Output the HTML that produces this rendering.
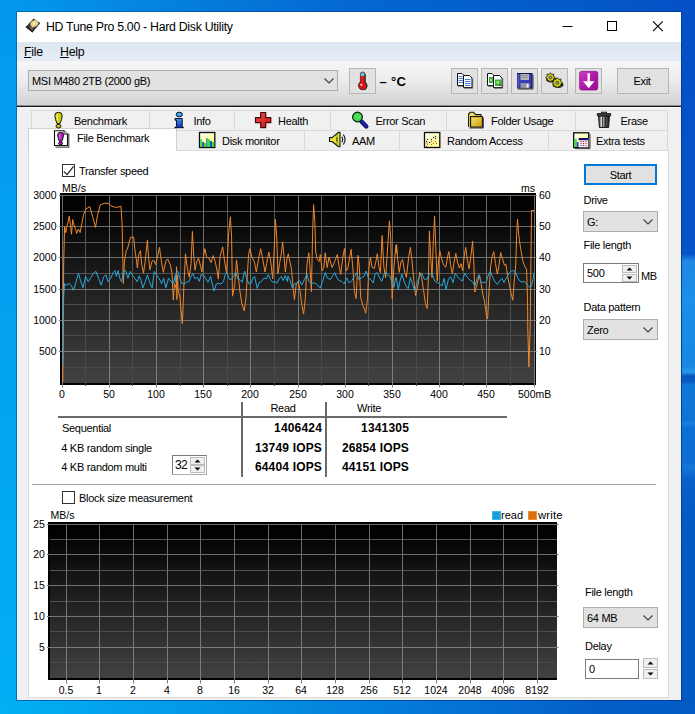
<!DOCTYPE html>
<html><head><meta charset="utf-8"><title>HD Tune Pro 5.00 - Hard Disk Utility</title>
<style>
*{box-sizing:border-box;margin:0;padding:0}
html,body{width:695px;height:714px;overflow:hidden}
body{position:relative;font-family:"Liberation Sans",sans-serif;font-size:12px;color:#000;
 background:linear-gradient(90deg,#039af0 0%,#0583e0 22%,#0468d0 50%,#045ac8 80%,#0450c5 100%);}
.abs{position:absolute}
.t{position:absolute;white-space:nowrap;line-height:14px;height:14px}
.ui{font-size:11px;letter-spacing:-0.3px}
.ui.b{font-size:12px;letter-spacing:0.17px}
.ax{font-size:10.5px}
.b{font-weight:bold}
#win{left:16px;top:11px;width:666px;height:690px;background:#f0f0f0;background-clip:padding-box;border:1px solid rgba(0,20,70,0.32)}
#title{left:17px;top:12px;width:664px;height:30px;background:#fff}
#menu{left:17px;top:42px;width:664px;height:19px;background:linear-gradient(180deg,#dde5f0 0%,#e8eef6 100%)}
#tool{left:17px;top:61px;width:664px;height:44px;background:linear-gradient(180deg,#f6f6f6 0%,#ececec 45%,#d2d2d2 100%)}
#toolline{left:17px;top:105px;width:664px;height:3px;background:linear-gradient(180deg,#8e8e8e 0,#8e8e8e 1px,#151515 1px,#151515 2px,#fafafa 2px,#fafafa 3px)}
.btn{position:absolute;background:#e1e1e1;border:1px solid #b6b6b6}
.combo{position:absolute;background:#e1e1e1;border:1px solid #adadad}
.edit{position:absolute;background:#fff;border:1px solid #7a7a7a}
.tab{position:absolute;background:#f0f0f0;border:1px solid #d9d9d9;border-bottom:none}
#page{left:28px;top:150px;width:641px;height:548px;background:#fff;border:1px solid #dcdcdc}
.chk{position:absolute;width:13px;height:13px;background:#fff;border:1px solid #333}
.spin{position:absolute;background:#f0f0f0;border:1px solid #bcbcbc}
</style></head>
<body>
<div class="abs" style="left:0;top:0;width:16px;height:714px;background:linear-gradient(180deg,#0398ee,#02aef4)"></div>
<div class="abs" style="left:682px;top:0;width:13px;height:714px;background:linear-gradient(180deg,#044fc6 0px,#0654c8 254px,#2088e4 261px,#1a90e8 300px,#1888e2 366px,#2a98ea 372px,#0a58c0 376px,#0a58c0 381px,#1078d8 385px,#0e74d6 420px,#1a80de 423px,#0c70d4 428px,#0c6cd2 462px,#1478da 466px,#0860c8 480px,#0458c4 530px,#035ac4 714px)"></div>
<div class="abs" style="left:0;top:701px;width:695px;height:13px;background:linear-gradient(90deg,#02b0f4 0%,#0496e6 30%,#0478d8 60%,#0460c8 85%,#035ac4 100%)"></div>
<div id="win" class="abs"></div>
<div id="title" class="abs"></div>
<div id="menu" class="abs"></div>
<div id="tool" class="abs"></div>
<div id="toolline" class="abs"></div>
<svg class="abs" style="left:25px;top:18px" width="16" height="15" viewBox="25 18 16 15">
<polygon points="33.6,18.6 40.4,23.1 32.5,32.5 25.6,26.9" fill="#3b3637"/>
<polygon points="25.6,26.9 32.5,32.5 32.8,31.2 26.3,25.9" fill="#151314"/>
<ellipse cx="34.4" cy="23.6" rx="4.1" ry="3.2" transform="rotate(-30 34.4 23.6)" fill="#e6cf85"/>
<ellipse cx="34.2" cy="23.4" rx="1.7" ry="1.3" transform="rotate(-30 34.2 23.4)" fill="#f7edc0"/>
<path d="M29.5 27.3 L32.5 29.5 M30.6 26.2 L33.4 28.3" stroke="#8d8b92" stroke-width="0.9"/>
</svg>
<div class="t " style="left:46px;top:20px;font-size:12.3px;letter-spacing:-0.28px">HD Tune Pro 5.00 - Hard Disk Utility</div>
<svg class="abs" style="left:555px;top:12px" width="126" height="30" viewBox="0 0 126 30"><path d="M7.5 14.5 H17.5" stroke="#000" stroke-width="1"/><rect x="52.5" y="9.5" width="9" height="9" fill="none" stroke="#000" stroke-width="1"/><path d="M98 9.3 L107.8 19.1 M107.8 9.3 L98 19.1" stroke="#000" stroke-width="1.1"/></svg>
<div class="t " style="left:24px;top:44.5px;font-size:12.3px;letter-spacing:-0.25px"><u>F</u>ile</div>
<div class="t " style="left:60px;top:44.5px;font-size:12.3px;letter-spacing:-0.25px"><u>H</u>elp</div>
<div class="combo" style="left:28px;top:70px;width:310px;height:21px"></div>
<div class="t ui" style="left:32px;top:73.5px;">MSI M480 2TB (2000 gB)</div>
<svg class="abs" style="left:323px;top:77px" width="12" height="8" viewBox="0 0 12 8"><path d="M1.5 1.5 L6 6 L10.5 1.5" fill="none" stroke="#444" stroke-width="1.2"/></svg>
<div class="btn" style="left:349px;top:68px;width:27px;height:26px"></div>
<svg class="abs" style="left:355px;top:70px" width="16" height="22" viewBox="355 70 16 22">
<path d="M360.4 74.3 Q360.4 72 362.6 72 Q364.9 72 364.9 74.3 V82 H360.4 Z" fill="#e01818" stroke="#222" stroke-width="0.7"/>
<path d="M360.8 74.3 Q360.8 72.4 362.6 72.4 Q364.5 72.4 364.5 74.3 V76 H360.8 Z" fill="#58c8e0"/>
<circle cx="362.7" cy="85.6" r="4.1" fill="#d81414" stroke="#3a0808" stroke-width="0.8"/>
<rect x="360.9" y="78" width="3.6" height="5" fill="#e01818"/>
<path d="M365.2 74 V82.5 Q367 84 366.9 86.5 Q366.5 89 364.5 89.8" fill="none" stroke="#222" stroke-width="1"/>
<circle cx="361.3" cy="84.8" r="1.1" fill="#fff" opacity="0.85"/>
</svg>
<div class="t b" style="left:379.5px;top:75px;font-size:13px;letter-spacing:0.3px">&#8211; &#176;C</div>
<div class="btn" style="left:451px;top:68px;width:27px;height:26px"></div>
<div class="btn" style="left:481px;top:68px;width:27px;height:26px"></div>
<div class="btn" style="left:511px;top:68px;width:27px;height:26px"></div>
<div class="btn" style="left:541px;top:68px;width:27px;height:26px"></div>
<div class="btn" style="left:575px;top:68px;width:27px;height:26px"></div>
<svg class="abs" style="left:455px;top:70px" width="22" height="22" viewBox="455 70 22 22"><path d="M457.5 73.5 H462 L464 75.5 V85.5 H457.5 Z" fill="#fff" stroke="#111" stroke-width="1"/><path d="M458 86.2 H464.6 V76" fill="none" stroke="#555" stroke-width="0.9"/><path d="M458.5 76.5H462.5M458.5 78.5H463M458.5 80.5H463M458.5 82.5H463" stroke="#3a80e0" stroke-width="1"/><path d="M463.5 75.5 H469.5 L472 78 V87.5 H463.5 Z" fill="#fff" stroke="#111" stroke-width="1"/><path d="M464 88.2 H472.7 V78.5" fill="none" stroke="#555" stroke-width="0.9"/><path d="M465 79.5H470.5M465 81.5H470.5M465 83.5H470.5M465 85.5H470.5" stroke="#3a80e0" stroke-width="1"/></svg>
<svg class="abs" style="left:485px;top:70px" width="22" height="22" viewBox="485 70 22 22"><path d="M487.5 73.5 H492 L494 75.5 V85.5 H487.5 Z" fill="#fff" stroke="#111" stroke-width="1"/><path d="M488 86.2 H494.6 V76" fill="none" stroke="#555" stroke-width="0.9"/><rect x="489" y="77" width="4.5" height="6" fill="#38b048"/><rect x="490" y="79" width="2" height="2" fill="#b8e850"/><path d="M493.5 75.5 H499.5 L502 78 V87.5 H493.5 Z" fill="#fff" stroke="#111" stroke-width="1"/><path d="M494 88.2 H502.7 V78.5" fill="none" stroke="#555" stroke-width="0.9"/><rect x="495" y="79.5" width="6" height="6.5" fill="#38b048"/><rect x="496.5" y="81" width="2.5" height="2.5" fill="#b8e850"/><rect x="499.5" y="84.5" width="1.2" height="1.2" fill="#123"/></svg>
<svg class="abs" style="left:515px;top:70px" width="22" height="22" viewBox="515 70 22 22">
<rect x="517.5" y="73.5" width="14.5" height="14.5" fill="#3a3ab4" stroke="#14144a" stroke-width="1"/>
<path d="M518 89 H533 V74.5" fill="none" stroke="#333" stroke-width="1"/>
<rect x="520.5" y="74" width="8.5" height="6" fill="#b4b4b4"/>
<path d="M521.5 75.5H528M521.5 77.5H528" stroke="#8a8a8a" stroke-width="0.8"/>
<rect x="520.5" y="83" width="9" height="5" fill="#9090a0"/><rect x="526.5" y="84" width="2" height="3.5" fill="#f0f0f0"/>
<path d="M518 74 V88" stroke="#7070e0" stroke-width="1"/>
</svg>
<svg class="abs" style="left:543px;top:70px" width="24" height="22" viewBox="543 70 24 22"><ellipse cx="551" cy="79.3" rx="5" ry="3.2" fill="#222"/><ellipse cx="558" cy="84.8" rx="5.5" ry="3.2" fill="#222"/><polygon points="555.2,77.5 553.4,78.8 553.8,80.9 551.7,80.5 550.4,82.3 549.1,80.5 547.0,80.9 547.4,78.8 545.6,77.5 547.4,76.2 547.0,74.1 549.1,74.5 550.4,72.7 551.7,74.5 553.8,74.1 553.4,76.2" fill="#d8d820" stroke="#2a2a08" stroke-width="0.9" stroke-linejoin="round"/><circle cx="550.4" cy="77.5" r="1.6" fill="#8a8a8a" stroke="#333" stroke-width="0.6"/><polygon points="562.5,82.8 560.7,84.2 561.0,86.5 558.7,86.2 557.3,88.0 555.9,86.2 553.6,86.5 553.9,84.2 552.1,82.8 553.9,81.4 553.6,79.1 555.9,79.4 557.3,77.6 558.7,79.4 561.0,79.1 560.7,81.4" fill="#d0d018" stroke="#2a2a08" stroke-width="0.9" stroke-linejoin="round"/><circle cx="557.3" cy="82.8" r="1.6" fill="#8a8a8a" stroke="#333" stroke-width="0.6"/></svg>
<svg class="abs" style="left:578px;top:70px" width="22" height="22" viewBox="578 70 22 22">
<defs><linearGradient id="pg" x1="0" y1="0" x2="1" y2="1"><stop offset="0" stop-color="#cc44c8"/><stop offset="0.5" stop-color="#b018aa"/><stop offset="1" stop-color="#980c94"/></linearGradient></defs>
<rect x="579.7" y="71.4" width="18" height="18.6" rx="2" fill="url(#pg)" stroke="#8a0a86" stroke-width="0.8"/>
<path d="M588.7 73.2 V84" stroke="#fff" stroke-width="2.4"/><path d="M583 81.3 H594.4 L588.7 88.2 Z" fill="#fff"/>
</svg>
<div class="btn" style="left:617px;top:68px;width:52px;height:26px"></div>
<div class="t ui" style="left:592px;width:100px;top:74px;text-align:center;">Exit</div>
<div class="tab" style="left:31px;top:110px;width:119px;height:21px"></div>
<div class="t ui" style="left:74px;top:113.5px;">Benchmark</div>
<div class="tab" style="left:149px;top:110px;width:86px;height:21px"></div>
<div class="t ui" style="left:193.5px;top:113.5px;">Info</div>
<div class="tab" style="left:234px;top:110px;width:97px;height:21px"></div>
<div class="t ui" style="left:278px;top:113.5px;">Health</div>
<div class="tab" style="left:330px;top:110px;width:117px;height:21px"></div>
<div class="t ui" style="left:375.5px;top:113.5px;">Error Scan</div>
<div class="tab" style="left:446px;top:110px;width:130px;height:21px"></div>
<div class="t ui" style="left:491px;top:113.5px;">Folder Usage</div>
<div class="tab" style="left:575px;top:110px;width:93px;height:21px"></div>
<div class="t ui" style="left:620.5px;top:113.5px;">Erase</div>
<div class="tab" style="left:176px;top:130px;width:129px;height:21px"></div>
<div class="t ui" style="left:222px;top:133.5px;">Disk monitor</div>
<div class="tab" style="left:304px;top:130px;width:96px;height:21px"></div>
<div class="t ui" style="left:352px;top:133.5px;">AAM</div>
<div class="tab" style="left:399px;top:130px;width:150px;height:21px"></div>
<div class="t ui" style="left:447px;top:133.5px;">Random Access</div>
<div class="tab" style="left:548px;top:130px;width:120px;height:21px"></div>
<div class="t ui" style="left:596px;top:133.5px;">Extra tests</div>
<div id="page" class="abs"></div>
<div class="tab" style="left:28px;top:128px;width:149px;height:23px;background:#fff;border-color:#d0d0d0"></div>
<div class="t ui" style="left:77px;top:131px;">File Benchmark</div>
<svg class="abs" style="left:52px;top:110px" width="14" height="20" viewBox="52 110 14 20"><path d="M54.8 115.5 Q54.8 112.3 58.5 112.3 Q62.2 112.3 62.2 115.5 Q61.900000000000006 119.3 60.0 123.6 H57.0 Q55.099999999999994 119.3 54.8 115.5 Z" fill="#cfcf10" stroke="#111" stroke-width="1"/><ellipse cx="58.5" cy="126.19999999999999" rx="2.5" ry="1.8" fill="#cfcf10" stroke="#111" stroke-width="1"/><path d="M57.3 114.3 Q56.9 117.3 57.9 120.3" stroke="#f4f48a" stroke-width="1.1" fill="none"/></svg>
<svg class="abs" style="left:172px;top:110px" width="14" height="20" viewBox="172 110 14 20">
<defs><linearGradient id="ig" x1="0" y1="0" x2="0" y2="1"><stop offset="0" stop-color="#3a9af4"/><stop offset="1" stop-color="#0c2cc0"/></linearGradient></defs>
<ellipse cx="179.3" cy="114.5" rx="3.1" ry="2.3" fill="#38a8f0" stroke="#0a0a20" stroke-width="1"/>
<path d="M175 118.5 H182.2 V126.3 L183.6 127.7 H174.6 L176.6 126.3 V120.2 H175 Z" fill="url(#ig)" stroke="#0a0a20" stroke-width="1" stroke-linejoin="round"/>
</svg>
<svg class="abs" style="left:253px;top:110px" width="20" height="20" viewBox="253 110 20 20">
<defs><linearGradient id="hg" x1="0" y1="0" x2="1" y2="1"><stop offset="0" stop-color="#f45050"/><stop offset="1" stop-color="#c41010"/></linearGradient></defs>
<path d="M260.7 112.5 H265.7 V117.7 H270.8 V122.7 H265.7 V127.6 H260.7 V122.7 H255.5 V117.7 H260.7 Z" fill="url(#hg)" stroke="#4a0606" stroke-width="1.2" stroke-linejoin="round"/>
</svg>
<svg class="abs" style="left:350px;top:110px" width="20" height="20" viewBox="350 110 20 20">
<path d="M361.5 121.5 L366.3 126.5" stroke="#101050" stroke-width="4.4" stroke-linecap="round"/>
<path d="M361.5 121.3 L366.2 126.2" stroke="#2020b8" stroke-width="2.6" stroke-linecap="round"/>
<circle cx="357.5" cy="117" r="4.9" fill="#38d848" stroke="#0a1a0a" stroke-width="1.1"/>
<path d="M355 117.5 L358 114.5 M357 119.5 L360.3 116.2" stroke="#a8f0a8" stroke-width="1"/>
</svg>
<svg class="abs" style="left:466px;top:110px" width="20" height="20" viewBox="466 110 20 20">
<defs><linearGradient id="fg" x1="0" y1="0" x2="1" y2="1"><stop offset="0" stop-color="#f8e468"/><stop offset="1" stop-color="#d09c10"/></linearGradient></defs>
<path d="M468.6 127 V114 L470.3 112.3 H473.6 L475.6 114.6 H481 V117" fill="#f4e060" stroke="#111" stroke-width="1.1" stroke-linejoin="round"/>
<rect x="470.6" y="116.6" width="11.8" height="10.5" fill="url(#fg)" stroke="#111" stroke-width="1.1"/>
<path d="M469.3 128 H483.3 V117.5" fill="none" stroke="#333" stroke-width="1"/>
</svg>
<svg class="abs" style="left:595px;top:110px" width="18" height="20" viewBox="595 110 18 20">
<defs><linearGradient id="tg" x1="0" y1="0" x2="1" y2="0"><stop offset="0" stop-color="#333"/><stop offset="0.3" stop-color="#e8e8e8"/><stop offset="0.55" stop-color="#666"/><stop offset="1" stop-color="#1a1a1a"/></linearGradient></defs>
<path d="M598.6 116 H609.4 L608.6 127.4 H599.4 Z" fill="url(#tg)" stroke="#111" stroke-width="1"/>
<path d="M602.5 117V127M605.5 117V127" stroke="#222" stroke-width="0.8"/>
<path d="M597.3 113.6 H610.7 V115.8 H597.3 Z" fill="#444" stroke="#111" stroke-width="0.9"/>
<path d="M601.6 113.5 V112.3 H606.4 V113.5" fill="none" stroke="#111" stroke-width="1.1"/>
</svg>
<svg class="abs" style="left:52px;top:129px" width="18" height="19" viewBox="52 129 18 19">
<path d="M55.5 147.2 H68.8 V133.5" fill="none" stroke="#555" stroke-width="1.2"/>
<path d="M54.5 130.7 H64 L67.5 134.2 V145.5 H54.5 Z" fill="#fff" stroke="#111" stroke-width="1.1"/>
<path d="M64 130.7 V134.2 H67.5" fill="#ddd" stroke="#111" stroke-width="0.8"/>
<path d="M57.64 134.86 Q57.64 132.3 60.6 132.3 Q63.56 132.3 63.56 134.86 Q63.260000000000005 137.9 61.800000000000004 141.34 H59.4 Q57.94 137.9 57.64 134.86 Z" fill="#b820c0" stroke="#111" stroke-width="1"/><ellipse cx="60.6" cy="143.42000000000002" rx="2.0" ry="1.4400000000000002" fill="#b820c0" stroke="#111" stroke-width="1"/><path d="M59.64 133.9 Q59.32 136.3 60.120000000000005 138.70000000000002" stroke="#e890f0" stroke-width="0.8800000000000001" fill="none"/></svg>
<svg class="abs" style="left:197px;top:130px" width="20" height="20" viewBox="197 130 20 20">
<defs><linearGradient id="yg" x1="0" y1="0" x2="1" y2="1"><stop offset="0" stop-color="#fffff4"/><stop offset="1" stop-color="#ffff80"/></linearGradient></defs>
<rect x="199.5" y="132.500" width="15.300" height="15" fill="url(#yg)" stroke="#0a0a0a" stroke-width="1.3"/>
<path d="M200.2 147V139.2H202.2V147ZM204.2 147V143H206.200V147ZM207.500 147V139.300H210V147ZM212 147V142H214.200V147Z" fill="#30e040"/>
<path d="M202.2 147V142H204.2V147ZM210 147V141H212V147Z" fill="#2450c0"/>
<path d="M206.200 147V138H207.500V147Z" fill="#208868"/>
</svg>
<svg class="abs" style="left:327px;top:130px" width="20" height="19" viewBox="327 130 20 19">
<path d="M329.5 137.600 H332 L338.700 132.300 H340 V146.800 H338.700 L332 141.500 H329.500 Z" fill="#e4e438" stroke="#111" stroke-width="1.1" stroke-linejoin="round"/>
<path d="M337 134.500 V145" stroke="#8a8a10" stroke-width="1"/>
<circle cx="337" cy="138.500" r="0.700" fill="#111"/><circle cx="337" cy="140.500" r="0.700" fill="#111"/>
<path d="M341.800 136.700 Q343.600 139.500 341.800 142.300 M343.300 134.500 Q346.800 139.500 343.300 144.500" fill="none" stroke="#111" stroke-width="1.1"/>
</svg>
<svg class="abs" style="left:422px;top:130px" width="20" height="20" viewBox="422 130 20 20"><rect x="424.500" y="132.500" width="15.300" height="15" fill="url(#yg)" stroke="#0a0a0a" stroke-width="1.3"/><rect x="426.9" y="138.9" width="1.200" height="1.200" fill="#2a2a50"/><rect x="425.9" y="140.9" width="1.200" height="1.200" fill="#2a2a50"/><rect x="428.9" y="141.9" width="1.200" height="1.200" fill="#2a2a50"/><rect x="430.9" y="138.9" width="1.200" height="1.200" fill="#2a2a50"/><rect x="432.9" y="136.9" width="1.200" height="1.200" fill="#2a2a50"/><rect x="434.9" y="135.9" width="1.200" height="1.200" fill="#2a2a50"/><rect x="434.9" y="137.9" width="1.200" height="1.200" fill="#2a2a50"/><rect x="426.9" y="143.9" width="1.200" height="1.200" fill="#c86010"/><rect x="430.9" y="143.9" width="1.200" height="1.200" fill="#c86010"/><rect x="430.9" y="140.9" width="1.200" height="1.200" fill="#c86010"/><rect x="432.9" y="142.9" width="1.200" height="1.200" fill="#c86010"/><rect x="434.9" y="140.9" width="1.200" height="1.200" fill="#c86010"/><rect x="435.9" y="142.9" width="1.200" height="1.200" fill="#c86010"/><rect x="426.4" y="142.4" width="1.200" height="1.200" fill="#c86010"/><rect x="426" y="146" width="1.200" height="1.200" fill="#c01010"/></svg>
<svg class="abs" style="left:572px;top:130px" width="20" height="20" viewBox="572 130 20 20">
<rect x="573.700" y="132.800" width="15" height="14.800" fill="url(#yg)" stroke="#0a0a0a" stroke-width="1.3"/>
<path d="M590 134 V148.600 H575" fill="none" stroke="#444" stroke-width="1"/>
<rect x="574.400" y="139" width="2.300" height="8" fill="#30e040"/><rect x="576.700" y="142" width="2" height="5" fill="#2450c0"/>
<rect x="578.700" y="138" width="9.600" height="9.300" fill="#f4f4f4"/>
<rect x="578.700" y="138" width="9.600" height="2.200" fill="#101070"/>
<path d="M580.500 141.500h1.200M583 141.500h1.200M585.500 141.500h1.200M580.500 143.500h1.200M583 143.500h1.200M585.500 143.500h1.200M580.500 145.500h1.200M585.500 145.500h1.200" stroke="#c02040" stroke-width="1.200"/>
<path d="M583 145.500h1.200" stroke="#2030a0" stroke-width="1.200"/>
</svg>
<div class="chk" style="left:62px;top:164px"></div>
<svg class="abs" style="left:62px;top:164px" width="13" height="13" viewBox="0 0 13 13"><path d="M1.8 7.4 L5.1 10.6 L11.5 2.3" fill="none" stroke="#222" stroke-width="1.2"/></svg>
<div class="t ui" style="left:79px;top:164px;">Transfer speed</div>
<svg class="abs" style="left:0;top:0" width="695" height="714" viewBox="0 0 695 714">
<defs><linearGradient id="cg" x1="0" y1="0" x2="0" y2="1"><stop offset="0" stop-color="#000"/><stop offset="0.08" stop-color="#030303"/><stop offset="1" stop-color="#424242"/></linearGradient><linearGradient id="mj1" gradientUnits="userSpaceOnUse" x1="0" y1="195" x2="0" y2="383"><stop offset="0" stop-color="#6a6a6a"/><stop offset="1" stop-color="#7e7e7e"/></linearGradient><linearGradient id="mn1" gradientUnits="userSpaceOnUse" x1="0" y1="195" x2="0" y2="383"><stop offset="0" stop-color="#5a5a5a"/><stop offset="1" stop-color="#484848"/></linearGradient><linearGradient id="mj2" gradientUnits="userSpaceOnUse" x1="0" y1="524" x2="0" y2="678"><stop offset="0" stop-color="#6a6a6a"/><stop offset="1" stop-color="#7e7e7e"/></linearGradient><linearGradient id="mn2" gradientUnits="userSpaceOnUse" x1="0" y1="524" x2="0" y2="678"><stop offset="0" stop-color="#5a5a5a"/><stop offset="1" stop-color="#484848"/></linearGradient></defs>
<rect x="60" y="193" width="476" height="192" fill="#000"/>
<rect x="62" y="195" width="473" height="188" fill="url(#cg)"/>
<path d="M85.5 195 V386 M132.5 195 V386 M180.5 195 V386 M227.5 195 V386 M274.5 195 V386 M321.5 195 V386 M368.5 195 V386 M416.5 195 V386 M463.5 195 V386 M510.5 195 V386 M62 211.5 H535 M62 242.5 H535 M62 273.5 H535 M62 304.5 H535 M62 335.5 H535 M62 367.5 H535" stroke="url(#mn1)" stroke-width="1" fill="none"/>
<path d="M62.5 195 V387.5 M109.5 195 V387.5 M156.5 195 V387.5 M203.5 195 V387.5 M250.5 195 V387.5 M298.5 195 V387.5 M345.5 195 V387.5 M392.5 195 V387.5 M439.5 195 V387.5 M486.5 195 V387.5 M534.5 195 V387.5 M59 195.5 H536.5 M59 226.5 H536.5 M59 257.5 H536.5 M59 289.5 H536.5 M59 320.5 H536.5 M59 351.5 H536.5" stroke="url(#mj1)" stroke-width="1" fill="none"/>
<path d="M62.8,381.9 L63.2,330.1 L63.7,262.8 L64.6,226.5 L65.8,232.6 L66.6,227.4 L68.0,222.2 L69.2,216.2 L70.4,224.8 L71.5,234.3 L72.7,219.6 L73.9,224.8 L75.3,228.3 L76.6,233.4 L78.4,229.1 L80.1,232.6 L81.3,226.5 L83.6,214.4 L86.0,208.9 L89.9,206.7 L92.5,216.2 L95.5,227.4 L97.7,214.4 L100.3,204.9 L104.6,203.2 L108.9,203.6 L111.5,206.3 L116.7,207.5 L121.0,206.2 L122.2,226.5 L123.3,283.5 L124.5,261.1 L126.2,250.7 L127.4,249.0 L128.8,243.8 L130.5,237.2 L133.6,237.2 L134.8,249.0 L136.6,261.1 L137.4,268.0 L138.8,254.2 L140.5,250.7 L141.7,264.5 L143.5,273.2 L145.2,261.1 L147.4,240.3 L148.6,257.6 L149.9,269.7 L152.1,261.1 L153.8,260.2 L155.6,264.5 L157.3,257.6 L159.5,247.3 L161.3,261.1 L163.3,272.3 L165.9,261.1 L167.6,259.0 L170.2,264.5 L172.0,273.2 L173.3,299.9 L174.5,283.5 L176.3,288.7 L176.6,266.8 L176.9,299.6 L177.2,280.6 L177.5,275.4 L178.3,291.0 L180.0,297.9 L181.2,311.7 L182.4,323.8 L183.8,287.5 L185.5,253.8 L187.3,268.5 L189.3,277.2 L191.1,263.3 L192.4,231.4 L193.8,256.4 L195.0,270.3 L196.8,261.6 L198.5,258.2 L200.7,266.8 L201.9,272.0 L203.7,254.7 L204.9,248.7 L206.6,257.3 L208.8,258.2 L211.1,262.5 L213.2,255.6 L215.2,261.6 L217.0,270.3 L218.3,278.9 L220.1,256.4 L222.7,246.9 L224.4,259.9 L226.6,273.7 L228.7,232.3 L230.4,216.7 L231.6,237.4 L232.5,296.2 L234.7,285.8 L236.5,259.9 L238.2,275.4 L239.9,291.0 L241.7,303.1 L244.2,310.8 L246.0,297.9 L247.4,273.7 L248.6,254.7 L249.8,248.7 L252.0,257.3 L254.3,261.6 L256.3,272.0 L258.1,261.6 L260.6,248.7 L262.9,259.9 L265.0,272.0 L266.7,263.3 L268.8,252.1 L270.5,259.9 L272.7,278.9 L274.5,242.6 L275.3,219.3 L276.7,235.7 L277.9,273.7 L279.6,263.3 L281.4,253.0 L282.6,241.8 L284.0,256.4 L285.3,272.0 L287.1,258.2 L288.3,253.8 L289.3,258.9 L291.5,269.2 L293.2,288.2 L294.4,299.5 L296.2,284.8 L298.4,281.3 L300.1,291.7 L301.9,305.5 L303.6,314.1 L305.3,298.6 L307.0,264.1 L308.8,252.8 L310.0,267.5 L311.4,291.7 L312.7,229.5 L313.6,204.5 L314.8,220.9 L315.7,252.0 L317.4,259.7 L319.1,261.5 L320.3,254.6 L322.1,271.0 L323.8,267.5 L325.2,252.8 L327.2,267.5 L329.0,257.2 L332.1,267.5 L334.7,261.5 L337.3,254.6 L339.3,267.5 L340.7,274.4 L342.8,257.2 L344.5,248.5 L346.2,271.0 L348.0,267.5 L349.7,257.2 L351.1,249.4 L352.8,267.5 L354.5,291.7 L356.2,298.6 L358.0,255.4 L359.4,267.5 L360.6,296.9 L362.8,305.5 L364.5,309.0 L365.7,313.3 L367.5,298.6 L368.8,269.2 L370.4,257.2 L372.1,267.5 L374.4,268.4 L376.1,260.6 L377.3,253.7 L379.0,267.5 L380.4,272.7 L382.1,235.6 L383.9,267.5 L385.6,277.9 L387.7,246.8 L389.4,220.9 L390.8,239.9 L392.2,298.6 L393.9,267.5 L396.0,245.1 L396.3,253.3 L396.6,244.4 L397.8,260.3 L399.2,272.3 L400.9,262.0 L402.6,259.4 L404.7,272.3 L406.4,277.5 L408.7,256.8 L410.4,247.3 L412.1,262.0 L413.9,281.0 L415.6,295.6 L417.8,286.2 L419.9,272.3 L421.6,277.5 L423.7,291.3 L425.4,303.4 L427.2,308.6 L428.5,274.1 L429.4,230.9 L430.6,255.1 L432.0,277.5 L433.4,239.5 L434.6,216.2 L435.8,248.2 L437.2,281.0 L438.5,262.0 L439.8,250.8 L441.5,258.5 L443.7,265.4 L445.8,267.2 L447.9,255.1 L448.9,251.6 L450.6,265.4 L452.4,274.1 L454.1,262.0 L455.8,253.3 L457.5,262.0 L459.3,268.0 L461.0,263.7 L462.7,270.6 L464.4,255.1 L465.7,247.3 L467.4,260.3 L469.1,268.9 L470.8,256.8 L472.6,241.3 L473.8,262.0 L474.8,292.2 L476.5,286.2 L478.3,279.2 L479.5,274.9 L481.2,284.4 L482.9,294.8 L484.6,301.7 L486.4,315.5 L487.6,319.0 L489.0,291.3 L490.7,265.4 L492.4,255.1 L493.8,251.6 L495.5,263.7 L497.3,274.1 L499.0,265.4 L500.7,252.5 L502.4,258.5 L504.5,265.4 L505.9,264.1 L507.6,276.2 L509.4,284.8 L511.1,293.4 L512.8,300.3 L514.5,277.9 L515.8,264.1 L516.6,234.7 L517.5,219.2 L518.7,234.7 L520.4,246.8 L522.7,260.6 L524.9,266.7 L526.6,269.2 L527.5,298.6 L527.8,330 L528.9,367 L530.2,326 L531.5,210.5 L534.2,210.5" stroke="#f0862a" stroke-width="1" fill="none" stroke-linejoin="round"/>
<path d="M62.8,364.7 L63.2,323.2 L63.7,295.6 L64.6,283.5 L66.6,285.2 L69.2,283.5 L71.5,286.1 L73.5,290.4 L76.1,281.8 L78.4,273.2 L80.4,280.1 L83.0,287.8 L85.6,276.6 L88.2,281.8 L90.8,277.5 L93.4,273.2 L96.0,271.4 L98.6,278.3 L101.2,285.2 L103.8,276.6 L106.0,274.9 L108.1,281.8 L110.7,278.3 L113.3,272.3 L115.0,270.6 L116.4,276.6 L118.1,270.6 L119.8,278.3 L121.5,281.8 L123.6,271.4 L125.7,270.6 L127.9,278.3 L130.2,271.4 L132.2,274.9 L134.8,278.3 L137.1,281.8 L139.2,275.7 L140.9,280.1 L142.9,287.8 L145.2,281.8 L147.4,274.9 L149.5,281.8 L152.1,287.8 L154.3,271.4 L156.4,274.9 L159.0,278.3 L161.6,283.5 L163.7,278.3 L165.9,287.8 L168.5,278.3 L171.1,281.8 L173.3,283.5 L175.4,274.9 L175.7,282.3 L176.0,275.4 L176.0,272.8 L177.8,271.1 L179.5,277.2 L181.7,283.2 L183.8,284.1 L186.4,282.3 L189.0,281.5 L190.7,277.2 L192.8,273.7 L195.0,278.9 L197.3,277.2 L199.4,281.5 L201.1,274.6 L203.7,275.4 L205.9,278.9 L208.0,282.3 L210.6,276.3 L212.3,284.1 L214.0,291.0 L216.3,284.1 L218.3,283.2 L220.9,284.1 L223.5,281.5 L225.3,274.6 L227.0,272.8 L229.6,279.7 L231.8,278.9 L233.9,276.3 L235.6,272.0 L237.7,278.9 L239.9,279.7 L242.2,282.3 L244.6,271.1 L246.8,278.9 L249.1,284.1 L251.2,283.2 L252.9,278.0 L254.6,276.3 L257.2,288.4 L259.4,282.3 L261.5,281.5 L264.1,278.0 L266.3,278.9 L268.4,274.6 L270.5,279.7 L272.7,282.3 L275.0,281.5 L277.1,283.2 L279.1,278.9 L281.4,276.3 L283.1,280.6 L285.3,275.4 L287.4,281.5 L288.0,276.2 L290.3,281.3 L292.4,288.2 L294.4,283.9 L296.7,283.1 L299.3,280.5 L301.9,284.8 L304.4,279.6 L307.0,274.4 L308.8,281.3 L311.4,283.1 L314.8,283.1 L317.4,284.8 L320.3,288.2 L322.6,281.3 L325.2,272.7 L327.2,277.9 L330.3,279.6 L332.9,275.3 L334.7,272.7 L336.9,277.9 L339.0,280.5 L341.6,281.3 L344.2,283.9 L346.7,277.9 L349.3,283.1 L351.9,280.5 L354.5,276.2 L356.6,272.7 L358.8,279.6 L361.4,277.9 L364.0,276.2 L366.3,271.0 L368.3,277.9 L370.9,279.6 L373.2,283.1 L375.2,273.6 L377.3,272.7 L379.6,277.9 L381.8,281.3 L383.9,274.4 L385.6,271.8 L387.7,275.3 L389.9,276.2 L391.6,281.3 L393.9,287.4 L395.6,277.9 L396.1,277.5 L398.3,289.6 L400.0,281.0 L401.8,274.1 L404.0,281.0 L406.1,286.2 L408.2,288.7 L410.4,277.5 L412.6,284.4 L414.7,290.5 L416.8,284.4 L419.0,277.5 L421.6,273.2 L424.2,279.2 L426.8,279.2 L429.4,274.1 L432.0,273.2 L434.6,281.0 L437.2,282.7 L439.8,283.6 L442.0,286.2 L444.1,278.4 L446.1,289.6 L448.4,279.2 L450.6,276.7 L453.1,282.7 L455.3,273.2 L457.5,276.7 L459.6,279.2 L462.2,281.0 L464.8,273.2 L467.4,277.5 L470.0,280.1 L472.6,281.8 L474.8,286.2 L476.9,279.2 L478.9,274.9 L481.2,282.7 L483.8,282.7 L486.4,281.8 L488.6,274.1 L490.3,271.5 L492.8,277.5 L495.0,281.8 L497.3,284.4 L499.7,281.0 L501.9,278.4 L504.2,282.7 L504.5,281.3 L506.6,277.9 L508.8,273.6 L511.1,271.0 L513.2,270.6 L515.2,271.8 L517.0,276.2 L519.2,280.5 L521.8,282.2 L524.4,281.3 L527.0,284.8 L529.6,287.4 L531.3,286.5 L533.0,279.6 L534.2,272.7" stroke="#2aa8dc" stroke-width="1" fill="none" stroke-linejoin="round"/>
<rect x="48" y="522" width="509" height="158" fill="#000"/>
<rect x="50" y="524" width="507" height="154" fill="url(#cg)"/>
<path d="M50 539.5 H557 M50 570.5 H557 M50 601.5 H557 M50 631.5 H557 M50 662.5 H557" stroke="url(#mn2)" stroke-width="1" fill="none"/>
<path d="M66.5 524 V683.5 M99.5 524 V683.5 M133.5 524 V683.5 M167.5 524 V683.5 M200.5 524 V683.5 M234.5 524 V683.5 M268.5 524 V683.5 M301.5 524 V683.5 M335.5 524 V683.5 M369.5 524 V683.5 M402.5 524 V683.5 M436.5 524 V683.5 M470.5 524 V683.5 M503.5 524 V683.5 M537.5 524 V683.5 M47 524.5 H558.5 M47 554.5 H558.5 M47 585.5 H558.5 M47 616.5 H558.5 M47 647.5 H558.5" stroke="url(#mj2)" stroke-width="1" fill="none"/>
<rect x="58" y="416" width="449" height="2" fill="#6a6a6a"/>
<rect x="241" y="402" width="2" height="75" fill="#6a6a6a"/>
<rect x="325" y="402" width="2" height="75" fill="#6a6a6a"/>
<rect x="32" y="484" width="624" height="1" fill="#a0a0a0"/>
<rect x="492.500" y="511.500" width="8" height="8" fill="#1a9cd8" stroke="#3ab8e8" stroke-width="1"/>
<rect x="528.500" y="511.500" width="8" height="8" fill="#d87010" stroke="#f09030" stroke-width="1"/>
</svg>
<div class="t ax" style="left:62px;top:180.5px;">MB/s</div>
<div class="t ax" style="right:160px;top:181px;text-align:right;">ms</div>
<div class="t ax" style="right:638.5px;top:187.5px;text-align:right;">3000</div>
<div class="t ax" style="right:638.5px;top:218.5px;text-align:right;">2500</div>
<div class="t ax" style="right:638.5px;top:249.5px;text-align:right;">2000</div>
<div class="t ax" style="right:638.5px;top:281.5px;text-align:right;">1500</div>
<div class="t ax" style="right:638.5px;top:312.5px;text-align:right;">1000</div>
<div class="t ax" style="right:638.5px;top:343.5px;text-align:right;">500</div>
<div class="t ax" style="left:539px;top:187.5px;">60</div>
<div class="t ax" style="left:539px;top:218.5px;">50</div>
<div class="t ax" style="left:539px;top:249.5px;">40</div>
<div class="t ax" style="left:539px;top:281.5px;">30</div>
<div class="t ax" style="left:539px;top:312.5px;">20</div>
<div class="t ax" style="left:539px;top:343.5px;">10</div>
<div class="t ax" style="left:12px;width:100px;top:386.5px;text-align:center;">0</div>
<div class="t ax" style="left:59px;width:100px;top:386.5px;text-align:center;">50</div>
<div class="t ax" style="left:106px;width:100px;top:386.5px;text-align:center;">100</div>
<div class="t ax" style="left:153px;width:100px;top:386.5px;text-align:center;">150</div>
<div class="t ax" style="left:200px;width:100px;top:386.5px;text-align:center;">200</div>
<div class="t ax" style="left:248px;width:100px;top:386.5px;text-align:center;">250</div>
<div class="t ax" style="left:295px;width:100px;top:386.5px;text-align:center;">300</div>
<div class="t ax" style="left:342px;width:100px;top:386.5px;text-align:center;">350</div>
<div class="t ax" style="left:389px;width:100px;top:386.5px;text-align:center;">400</div>
<div class="t ax" style="left:436px;width:100px;top:386.5px;text-align:center;">450</div>
<div class="t ax" style="left:518px;top:386.5px;">500mB</div>
<div class="t ui" style="left:233px;width:100px;top:401px;text-align:center;">Read</div>
<div class="t ui" style="left:319px;width:100px;top:401px;text-align:center;">Write</div>
<div class="t ui" style="left:62px;top:421px;">Sequential</div>
<div class="t ui" style="left:61.3px;top:440.7px;">4 KB random single</div>
<div class="t ui" style="left:61.3px;top:459.6px;">4 KB random multi</div>
<div class="t ui b" style="right:373px;top:420.6px;text-align:right;">1406424</div>
<div class="t ui b" style="right:373px;top:440.6px;text-align:right;">13749 IOPS</div>
<div class="t ui b" style="right:373px;top:459.6px;text-align:right;">64404 IOPS</div>
<div class="t ui b" style="right:286px;top:420.6px;text-align:right;">1341305</div>
<div class="t ui b" style="right:286px;top:440.6px;text-align:right;">26854 IOPS</div>
<div class="t ui b" style="right:286px;top:459.6px;text-align:right;">44151 IOPS</div>
<div class="edit" style="left:172px;top:455px;width:35px;height:20px;border-color:#7a7a7a #adadad #adadad #7a7a7a"></div>
<div class="t ui" style="left:175px;top:457.5px;font-size:12px;letter-spacing:-0.7px">32</div>
<div class="spin" style="left:190px;top:457px;width:15px;height:8px"></div>
<div class="spin" style="left:190px;top:465px;width:15px;height:8px"></div>
<svg class="abs" style="left:190px;top:457px" width="15" height="16" viewBox="0 0 15 16"><path d="M4.5 5.5 L7.5 2.5 L10.5 5.5 Z M4.5 10.5 L7.5 13.5 L10.5 10.5 Z" fill="#000"/></svg>
<div class="btn" style="left:584px;top:164px;width:73px;height:21px;border:2px solid #0078d7"></div>
<div class="t ui" style="left:570.5px;width:100px;top:167.5px;text-align:center;">Start</div>
<div class="t ui" style="left:583.5px;top:192.5px;">Drive</div>
<div class="combo" style="left:583px;top:211px;width:75px;height:21px"></div>
<div class="t ui" style="left:587px;top:214.5px;">G:</div>
<svg class="abs" style="left:642px;top:218px" width="12" height="8" viewBox="0 0 12 8"><path d="M1.5 1.5 L6 6 L10.5 1.5" fill="none" stroke="#444" stroke-width="1.2"/></svg>
<div class="t ui" style="left:583.5px;top:237.5px;">File length</div>
<div class="edit" style="left:583px;top:263px;width:56px;height:20px"></div>
<div class="t ui" style="left:587px;top:266px;">500</div>
<div class="spin" style="left:622px;top:265px;width:15px;height:8px"></div>
<div class="spin" style="left:622px;top:274px;width:15px;height:8px"></div>
<svg class="abs" style="left:622px;top:265px" width="15" height="17" viewBox="0 0 15 17"><path d="M4.5 5.5 L7.5 2.5 L10.5 5.5 Z M4.5 11.5 L7.5 14.5 L10.5 11.5 Z" fill="#000"/></svg>
<div class="t ui" style="left:641px;top:269px;">MB</div>
<div class="t ui" style="left:583.5px;top:300px;">Data pattern</div>
<div class="combo" style="left:583px;top:319px;width:75px;height:21px"></div>
<div class="t ui" style="left:587px;top:322.5px;">Zero</div>
<svg class="abs" style="left:642px;top:326px" width="12" height="8" viewBox="0 0 12 8"><path d="M1.5 1.5 L6 6 L10.5 1.5" fill="none" stroke="#444" stroke-width="1.2"/></svg>
<div class="chk" style="left:62px;top:491px"></div>
<div class="t ui" style="left:79px;top:490.5px;">Block size measurement</div>
<div class="t ax" style="left:50.5px;top:508px;">MB/s</div>
<div class="t ax" style="right:650.2px;top:516.5px;text-align:right;">25</div>
<div class="t ax" style="right:650.2px;top:546.5px;text-align:right;">20</div>
<div class="t ax" style="right:650.2px;top:577.5px;text-align:right;">15</div>
<div class="t ax" style="right:650.2px;top:608.5px;text-align:right;">10</div>
<div class="t ax" style="right:650.2px;top:639.5px;text-align:right;">5</div>
<div class="t ax" style="left:16px;width:100px;top:682.5px;text-align:center;">0.5</div>
<div class="t ax" style="left:49px;width:100px;top:682.5px;text-align:center;">1</div>
<div class="t ax" style="left:83px;width:100px;top:682.5px;text-align:center;">2</div>
<div class="t ax" style="left:117px;width:100px;top:682.5px;text-align:center;">4</div>
<div class="t ax" style="left:150px;width:100px;top:682.5px;text-align:center;">8</div>
<div class="t ax" style="left:184px;width:100px;top:682.5px;text-align:center;">16</div>
<div class="t ax" style="left:218px;width:100px;top:682.5px;text-align:center;">32</div>
<div class="t ax" style="left:251px;width:100px;top:682.5px;text-align:center;">64</div>
<div class="t ax" style="left:285px;width:100px;top:682.5px;text-align:center;">128</div>
<div class="t ax" style="left:319px;width:100px;top:682.5px;text-align:center;">256</div>
<div class="t ax" style="left:352px;width:100px;top:682.5px;text-align:center;">512</div>
<div class="t ax" style="left:386px;width:100px;top:682.5px;text-align:center;">1024</div>
<div class="t ax" style="left:420px;width:100px;top:682.5px;text-align:center;">2048</div>
<div class="t ax" style="left:453px;width:100px;top:682.5px;text-align:center;">4096</div>
<div class="t ax" style="left:487px;width:100px;top:682.5px;text-align:center;">8192</div>
<div class="t ax" style="left:501px;top:508px;font-size:11px">read</div>
<div class="t ax" style="left:538px;top:508px;font-size:11.3px;letter-spacing:0.15px">write</div>
<div class="t ui" style="left:585px;top:585px;">File length</div>
<div class="combo" style="left:583px;top:607px;width:75px;height:21px"></div>
<div class="t ui" style="left:587px;top:610.5px;">64 MB</div>
<svg class="abs" style="left:642px;top:614px" width="12" height="8" viewBox="0 0 12 8"><path d="M1.5 1.5 L6 6 L10.5 1.5" fill="none" stroke="#444" stroke-width="1.2"/></svg>
<div class="t ui" style="left:585px;top:639px;">Delay</div>
<div class="edit" style="left:585px;top:659px;width:54px;height:20px"></div>
<div class="t ui" style="left:589px;top:662px;">0</div>
<div class="spin" style="left:643px;top:658px;width:15px;height:10px"></div>
<div class="spin" style="left:643px;top:669px;width:15px;height:10px"></div>
<svg class="abs" style="left:643px;top:658px" width="15" height="21" viewBox="0 0 15 21"><path d="M4.5 6.5 L7.5 3.5 L10.5 6.5 Z M4.5 14.5 L7.5 17.5 L10.5 14.5 Z" fill="#000"/></svg>
</body></html>
